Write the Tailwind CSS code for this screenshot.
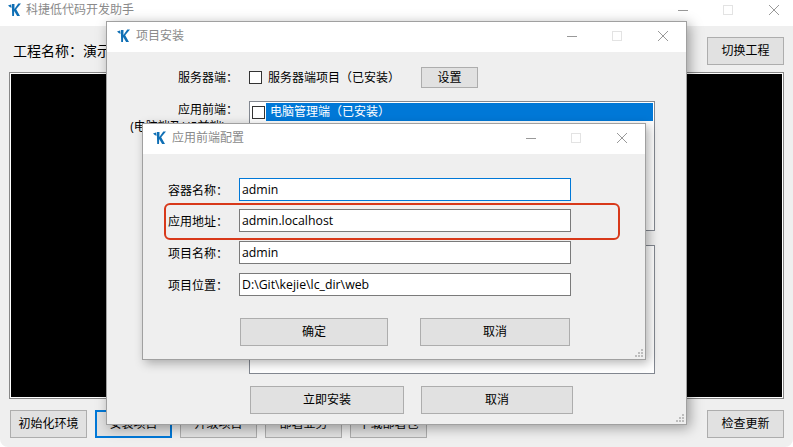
<!DOCTYPE html>
<html lang="zh">
  <head>
    <meta charset="UTF-8" />
    <script src="https://cdn.jsdelivr.net/npm/@tailwindcss/browser@4"></script>
    <title>科捷低代码开发助手</title>
  </head>
  <body class="relative w-[793px] h-[447px] overflow-hidden bg-white text-xs text-black font-['Open_Sans','Noto_Sans_CJK_SC',sans-serif]">
    <!-- main window -->
    <div class="w-[793px] h-[447px] flex flex-col bg-[#efefef] rounded-b-lg overflow-hidden">
      <div class="h-[26px] shrink-0 bg-white flex items-center pl-2 pb-[6px]">
        <svg class="w-[13px] h-[14px] shrink-0" viewBox="0 0 13 14"><path d="M0 2.500l3-1 .6 3.200-1.600-.4zM3.800 1h2.700l-.1 5 3.900-5.400h2.700L8.200 6.200l3.800 6.800H9.100L6.200 8 6 13H4.200z" fill="#0f6fb5"/></svg>
        <span class="ml-[5px] text-[#8a8a8a]">科捷低代码开发助手</span>
        <div class="ml-auto mr-[14px] flex items-center gap-[35px]">
          <span class="w-[10px] h-px bg-[#999]"></span>
          <span class="w-[10px] h-[10px] mr-px border border-[#e3e3e3]"></span>
          <svg class="w-[10px] h-[10px]" viewBox="0 0 10 10"><path d="M0 0l10 10M10 0L0 10" stroke="#999" fill="none"/></svg>
        </div>
      </div>
      <div class="h-[46px] shrink-0 flex items-start pt-[11px] pl-[13px] pr-[9px]">
        <span class="text-sm leading-[28px]">工程名称：演示</span>
        <button class="ml-auto w-[77px] h-[28px] bg-[#e1e1e1] border border-[#adadad]">切换工程</button>
      </div>
      <div class="mx-[9px] h-[327px] border border-[#888] bg-white p-px">
        <div class="w-full h-full bg-black"></div>
      </div>
      <div class="flex mt-[11px] pl-[10px] pr-[9px] gap-2">
        <button class="w-[77px] h-[28px] bg-[#e1e1e1] border border-[#adadad]">初始化环境</button>
        <button class="w-[77px] h-[28px] bg-[#e1e1e1] border-2 border-[#0078d7]">安装项目</button>
        <button class="w-[77px] h-[28px] bg-[#e1e1e1] border border-[#adadad]">升级项目</button>
        <button class="w-[77px] h-[28px] bg-[#e1e1e1] border border-[#adadad]">部署业务</button>
        <button class="w-[77px] h-[28px] bg-[#e1e1e1] border border-[#adadad]">下载部署包</button>
        <button class="ml-auto w-[77px] h-[28px] bg-[#e1e1e1] border border-[#adadad]">检查更新</button>
      </div>
    </div>

    <!-- project install window -->
    <div class="absolute left-[106px] top-[21px] w-[581px] h-[404px] flex flex-col bg-[#efefef] border border-[#a0a0a0] shadow-[3px_3px_12px_rgba(0,0,0,0.35)]">
      <div class="h-[30px] shrink-0 bg-white flex items-center pl-[10px] pb-[2px]">
        <svg class="w-[13px] h-[14px] shrink-0" viewBox="0 0 13 14"><path d="M0 2.500l3-1 .6 3.200-1.600-.4zM3.800 1h2.700l-.1 5 3.900-5.400h2.700L8.200 6.200l3.800 6.800H9.100L6.200 8 6 13H4.200z" fill="#0f6fb5"/></svg>
        <span class="ml-[6px] text-[#8a8a8a]">项目安装</span>
        <div class="ml-auto mr-[18px] flex items-center gap-[35px]">
          <span class="w-[10px] h-px bg-[#999]"></span>
          <span class="w-[10px] h-[10px] mr-px border border-[#e3e3e3]"></span>
          <svg class="w-[10px] h-[10px]" viewBox="0 0 10 10"><path d="M0 0l10 10M10 0L0 10" stroke="#999" fill="none"/></svg>
        </div>
      </div>
      <div class="flex items-center mt-[15px] h-[21px]">
        <span class="w-[131px] text-right">服务器端：</span>
        <span class="ml-[11px] w-[13px] h-[13px] border border-[#333] bg-white"></span>
        <span class="ml-[6px]">服务器端项目（已安装）</span>
        <button class="ml-[21px] w-[57px] h-[21px] bg-[#e1e1e1] border border-[#adadad]">设置</button>
      </div>
      <div class="flex mt-[13px]">
        <div class="w-[131px] text-right shrink-0 leading-[18px]">
          <p>应用前端：</p>
          <p class="whitespace-nowrap mr-px mt-[-1px]">(电脑端及H5前端)：</p>
        </div>
        <div class="ml-[11px] w-[406px] h-[130px] border border-[#828790] bg-white pl-[2px] pr-px py-px">
          <div class="flex items-center h-[18px]">
            <span class="w-[13px] h-[13px] border border-[#333] bg-white shrink-0"></span>
            <span class="ml-px flex-1 h-[18px] pl-1 leading-[18px] bg-[#0078d7] text-white">电脑管理端（已安装）</span>
          </div>
        </div>
      </div>
      <div class="ml-[142px] mt-[14px] w-[406px] h-[129px] border border-[#828790] bg-white"></div>
      <div class="flex ml-[143px] mt-[12px] gap-[17px]">
        <button class="w-[154px] h-[28px] bg-[#e1e1e1] border border-[#adadad]">立即安装</button>
        <button class="w-[152px] h-[28px] bg-[#e1e1e1] border border-[#adadad]">取消</button>
      </div>
      <svg class="absolute right-px bottom-px w-[9px] h-[9px]" viewBox="0 0 9 9" fill="#bdbdbd"><path d="M6 0h2v2H6zM3 3h2v2H3zM6 3h2v2H6zM0 6h2v2H0zM3 6h2v2H3zM6 6h2v2H6z"/></svg>
    </div>

    <!-- front-end config dialog -->
    <div class="absolute left-[142px] top-[123px] w-[504px] h-[237px] flex flex-col bg-[#efefef] border border-[#a0a0a0] shadow-[3px_3px_10px_rgba(0,0,0,0.3)]">
      <div class="h-[30px] shrink-0 bg-white flex items-center pl-[10px] pb-[2px]">
        <svg class="w-[13px] h-[14px] shrink-0" viewBox="0 0 13 14"><path d="M0 2.500l3-1 .6 3.200-1.600-.4zM3.800 1h2.700l-.1 5 3.900-5.400h2.700L8.200 6.200l3.800 6.800H9.100L6.200 8 6 13H4.200z" fill="#0f6fb5"/></svg>
        <span class="ml-[6px] text-[#8a8a8a]">应用前端配置</span>
        <div class="ml-auto mr-[18px] flex items-center gap-[35px]">
          <span class="w-[10px] h-px bg-[#999]"></span>
          <span class="w-[10px] h-[10px] mr-px border border-[#e3e3e3]"></span>
          <svg class="w-[10px] h-[10px]" viewBox="0 0 10 10"><path d="M0 0l10 10M10 0L0 10" stroke="#999" fill="none"/></svg>
        </div>
      </div>
      <div class="flex flex-col mt-[24px] pl-[25px]">
        <div class="flex items-center h-[23px]"><span class="w-[71px] pt-[2px]">容器名称：</span><span class="w-[332px] h-[23px] pl-[2px] text-[12.3px] leading-[22px] border border-[#0078d7] bg-white">admin</span></div>
        <div class="flex items-center h-[23px] mt-2"><span class="w-[71px] pt-[2px]">应用地址：</span><span class="w-[332px] h-[23px] pl-[2px] text-[12.3px] leading-[22px] border border-[#7a7a7a] bg-white">admin.localhost</span></div>
        <div class="flex items-center h-[23px] mt-[9px]"><span class="w-[71px] pt-[2px]">项目名称：</span><span class="w-[332px] h-[23px] pl-[2px] text-[12.3px] leading-[22px] border border-[#7a7a7a] bg-white">admin</span></div>
        <div class="flex items-center h-[23px] mt-[9px]"><span class="w-[71px] pt-[2px]">项目位置：</span><span class="w-[332px] h-[23px] pl-[2px] text-[12.3px] leading-[22px] border border-[#7a7a7a] bg-white">D:\Git\kejie\lc_dir\web</span></div>
      </div>
      <div class="flex ml-[97px] mt-[22px] gap-8">
        <button class="w-[148px] h-[28px] bg-[#e1e1e1] border border-[#adadad]">确定</button>
        <button class="w-[150px] h-[28px] bg-[#e1e1e1] border border-[#adadad]">取消</button>
      </div>
      <svg class="absolute right-px bottom-px w-[9px] h-[9px]" viewBox="0 0 9 9" fill="#bdbdbd"><path d="M6 0h2v2H6zM3 3h2v2H3zM6 3h2v2H6zM0 6h2v2H0zM3 6h2v2H3zM6 6h2v2H6z"/></svg>
    </div>

    <!-- red annotation round the address row -->
    <div class="absolute left-[164px] top-[203px] w-[456px] h-[37px] border-2 border-[#d8391a] rounded-[6px]"></div>
  </body>
</html>
